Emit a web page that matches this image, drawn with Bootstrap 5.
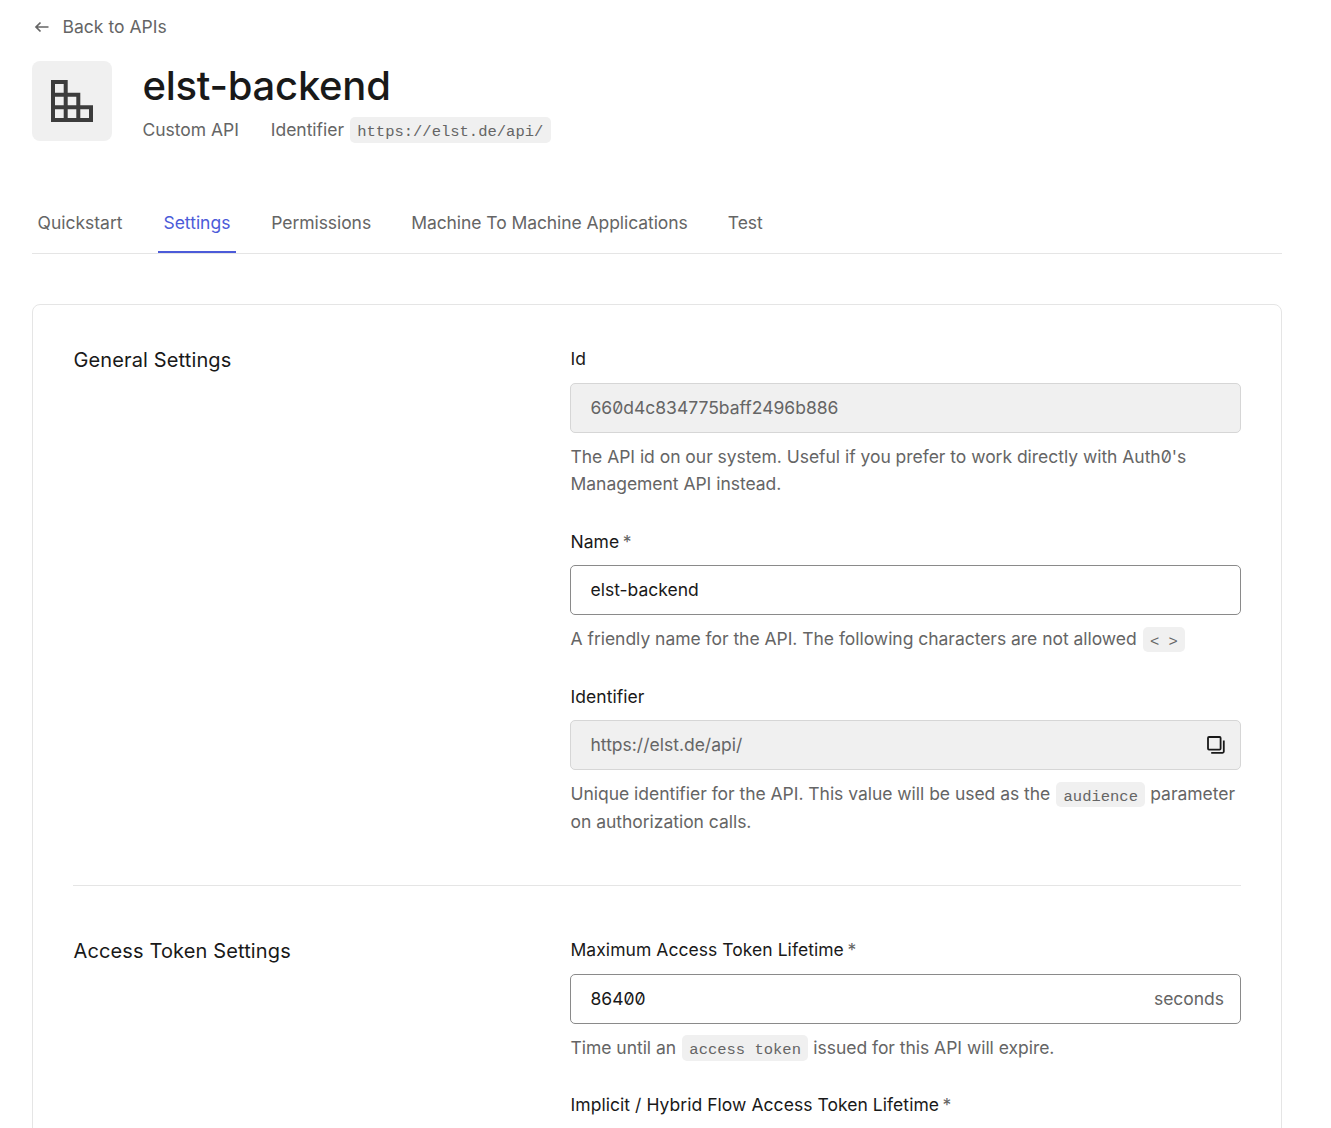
<!DOCTYPE html>
<html lang="en">
<head>
<meta charset="utf-8">
<meta name="viewport" content="width=device-width, initial-scale=1">
<title>elst-backend</title>
<link rel="stylesheet" href="https://cdn.jsdelivr.net/npm/bootstrap@5.3.0/dist/css/bootstrap.min.css">
<style>
body{font-family:Inter,sans-serif;font-size:17.5px;line-height:27.5px;color:#656565;font-weight:400;letter-spacing:-.03px;font-feature-settings:"zero";background:#fff}
.page-wrap{width:1250px;height:1128px;overflow:hidden;margin-left:32px;padding-top:13px}
.back-link{color:#656565;gap:13.5px;padding-left:2px;letter-spacing:.03px}
.app-head{margin-top:20px;gap:30.5px}
.api-icon{width:80px;height:80px;border-radius:8px;background:#f0f0f0}
.api-title{font-size:40px;line-height:50px;font-weight:500;letter-spacing:-.25px;color:#191919;margin-bottom:5px}
.meta-line{gap:32px;height:27.5px}
code{font-family:"Liberation Mono",monospace;font-size:15.5px;line-height:17px;letter-spacing:0;color:#656565;background:#f0f0f0;border-radius:5px;padding:5.5px 7.4px 2px;margin-left:1px}
.tab-bar{border-bottom:1px solid #e5e5e5;gap:29.9px;margin-top:59.5px}
.tab-bar .nav-link{padding:6px 5.5px 15px;color:#656565;border-bottom:2px solid transparent;letter-spacing:-.07px}
.tab-bar .nav-link:nth-child(-n+2){letter-spacing:0}
.tab-bar .nav-link:nth-child(n+4){margin-left:-.8px}
.tab-bar .nav-link.active{color:#4c5bd9;border-color:#4c5bd9}
.panel{margin-top:50px;border:1px solid #e5e5e5;border-radius:8px;padding:40px}
.side{width:497px;flex:none}
.fields{width:671px;flex:none}
.sec-title{font-size:20px;line-height:30px;font-weight:400;letter-spacing:.13px;padding-left:.5px;color:#191919}
.form-label{color:#191919;letter-spacing:.05px;margin-bottom:10px;padding-left:.5px;display:block}
.form-label span{color:#656565;margin-left:3.5px}
.field{margin-bottom:30px}
.field:last-child{margin-bottom:0}
.form-control{height:50px;border:1px solid #8a8a8a;border-radius:5px;padding:0 19.5px;font-size:17.5px;font-feature-settings:"zero";color:#191919}
.form-control.snug{padding-bottom:1px}
.form-control:disabled{background:#f0f0f0;border-color:#d6d6d6;color:#656565;opacity:1}
.help{margin-top:10px;height:27.5px;padding-left:.5px}
.help.two-line{height:55px}
.rule{border-top:1px solid #e5e5e5;margin:50px 0}
.in-end{position:absolute;right:17px;top:0;height:50px;color:#656565}
.in-end.copy{right:16px;color:#191919}
</style>
<script src="https://cdn.jsdelivr.net/npm/bootstrap@5.3.0/dist/js/bootstrap.bundle.min.js"></script>
</head>
<body>
<main class="page-wrap">
<a class="back-link d-flex align-items-center text-decoration-none" href="#"><svg width="15" height="14" viewBox="0 0 15 14" fill="none" stroke="currentColor" stroke-width="1.7"><path d="M14.5 7H2M6.5 2.5 2 7l4.5 4.5"/></svg><span>Back to APIs</span></a>
<header class="app-head d-flex">
<div class="api-icon d-flex align-items-center justify-content-center"><svg width="42" height="42" viewBox="0 0 42 42" fill="none" stroke="#3c3c3c" stroke-width="4"><path d="M2 2h12.7v38H2zM2 14.7h25.3V40H2M2 27.3h38V40H2"/></svg></div>
<div><h1 class="api-title">elst-backend</h1>
<div class="meta-line d-flex"><span>Custom API</span><span>Identifier <code>https://elst.de/api/</code></span></div></div>
</header>
<nav class="nav tab-bar"><a class="nav-link" href="#">Quickstart</a><a class="nav-link active" href="#">Settings</a><a class="nav-link" href="#">Permissions</a><a class="nav-link" href="#">Machine To Machine Applications</a><a class="nav-link" href="#">Test</a></nav>
<section class="panel">
<div class="d-flex">
<div class="side"><h2 class="sec-title mb-0">General Settings</h2></div>
<div class="fields">
<div class="field"><label class="form-label">Id</label><input class="form-control" disabled value="660d4c834775baff2496b886"><div class="help two-line">The API id on our system. Useful if you prefer to work directly with Auth0's Management API instead.</div></div>
<div class="field"><label class="form-label">Name<span>*</span></label><input class="form-control snug" value="elst-backend"><div class="help">A friendly name for the API. The following characters are not allowed <code>&lt; &gt;</code></div></div>
<div class="field"><label class="form-label">Identifier</label><div class="position-relative"><input class="form-control snug" disabled value="https://elst.de/api/"><span class="in-end copy d-flex align-items-center"><svg width="18" height="18" viewBox="0 0 18 18" fill="none" stroke="currentColor" stroke-width="1.8"><rect x="1" y="1" width="12.6" height="12.6" rx="1"/><path d="M16.8 4.6v11q0 1.2-1.2 1.2H4.2"/></svg></span></div><div class="help two-line">Unique identifier for the API. This value will be used as the <code>audience</code> parameter on authorization calls.</div></div>
</div>
</div>
<div class="rule"></div>
<div class="d-flex">
<div class="side"><h2 class="sec-title mb-0">Access Token Settings</h2></div>
<div class="fields">
<div class="field"><label class="form-label">Maximum Access Token Lifetime<span>*</span></label><div class="position-relative"><input class="form-control" value="86400"><span class="in-end d-flex align-items-center">seconds</span></div><div class="help">Time until an <code>access token</code> issued for this API will expire.</div></div>
<div class="field"><label class="form-label">Implicit / Hybrid Flow Access Token Lifetime<span>*</span></label></div>
</div>
</div>
</section>
</main>
</body>
</html>
